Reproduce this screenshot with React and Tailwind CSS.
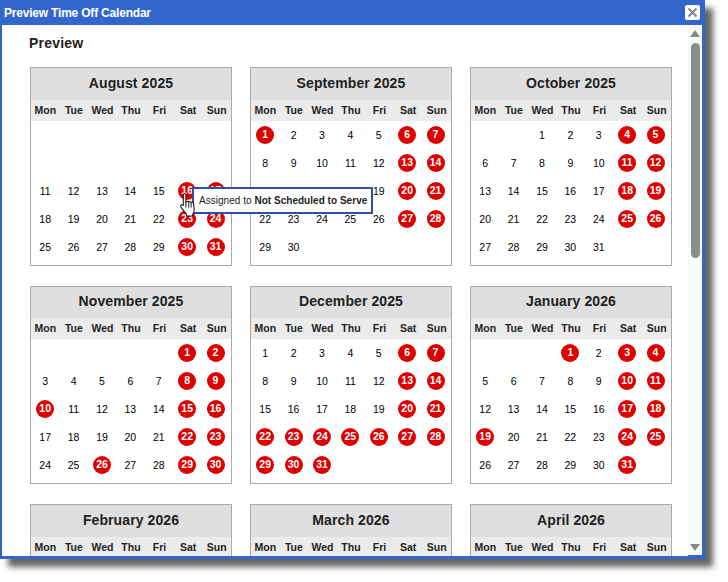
const cal = [
  { t: "August 2025", s: 4, n: 31, r: [16,17,23,24,30,31], hide: 10 },
  { t: "September 2025", s: 0, n: 30, r: [1,6,7,13,14,20,21,27,28] },
  { t: "October 2025", s: 2, n: 31, r: [4,5,11,12,18,19,25,26] },
  { t: "November 2025", s: 5, n: 30, r: [1,2,8,9,10,15,16,22,23,26,29,30] },
  { t: "December 2025", s: 0, n: 31, r: [6,7,13,14,20,21,22,23,24,25,26,27,28,29,30,31] },
  { t: "January 2026", s: 3, n: 31, r: [1,3,4,10,11,17,18,19,24,25,31] },
  { t: "February 2026", s: 6, n: 28, r: [] },
  { t: "March 2026", s: 6, n: 31, r: [] },
  { t: "April 2026", s: 2, n: 30, r: [] },
];
const week = ["Mon","Tue","Wed","Thu","Fri","Sat","Sun"];

function Month({ m }) {
  const cells = [];
  for (let i = 0; i < m.s; i++) cells.push(null);
  for (let d = 1; d <= m.n; d++) cells.push(d);
  return (
    <div className="border border-[#aaaaaa] h-[198.5px] shrink-0">
      <div className="h-[31.5px] pb-[1px] bg-[#dfdfdf] flex items-center justify-center text-[14px] font-bold text-[#222222] tracking-[0.1px]">{m.t}</div>
      <div className="h-[21px] pt-[1px] bg-[#ebebeb] grid grid-cols-7 items-center text-center text-[10.5px] font-bold text-[#222222]">
        {week.map((w) => <div key={w}>{w}</div>)}
      </div>
      <div className="grid grid-cols-[repeat(7,28.4px)] auto-rows-[28px]">
        {cells.map((d, i) => (
          <div key={i} className="flex items-center justify-center text-[10.5px] text-black">
            {d === null || (m.hide && d <= m.hide) ? null : m.r.includes(d) ? (
              <span className="w-[18px] h-[18px] rounded-full bg-[#dd0000] text-white font-bold flex items-center justify-center">{d}</span>
            ) : <span className="pt-[2px]">{d}</span>}
          </div>
        ))}
      </div>
    </div>
  );
}

export default function App() {
  return (
    <div className="w-[728px] h-[582px] bg-white font-['Liberation_Sans',Arial,sans-serif] overflow-hidden">
      <div className="relative w-[705px] h-[559px] flex flex-col bg-[#3366cc] shadow-[8px_8px_6px_rgba(0,0,0,0.6)]">
        <div className="h-[25px] shrink-0 flex items-center justify-between pl-[4px] pr-[5px]">
          <span className="text-[12px] font-bold text-white tracking-[-0.2px]">Preview Time Off Calendar</span>
          <span className="w-[15px] h-[15px] bg-white rounded-[2px] flex items-center justify-center">
            <svg width="11" height="11" viewBox="0 0 11 11"><path d="M1.5 1.5l8 8M9.5 1.5l-8 8" stroke="#7f8c8d" strokeWidth="2.2" /></svg>
          </span>
        </div>
        <div className="flex-1 min-h-0 flex ml-[2px] mr-[3px] mb-[3px]">
          <div className="flex-1 min-w-0 overflow-hidden pl-[28px] bg-white">
            <div className="h-[36px] mb-[6px] flex items-center text-[14px] font-bold text-[#222222] -ml-[1px] tracking-[0.2px]">Preview</div>
            <div className="grid grid-cols-[202px_202px_202px] gap-x-[18px] gap-y-[20px]">
              {cal.map((m) => <Month key={m.t} m={m} />)}
            </div>
          </div>
          <div className="w-[14px] shrink-0 bg-[#fafafa] flex flex-col items-center mb-[1px]">
            <svg className="mt-[5px] shrink-0" width="10" height="7" viewBox="0 0 10 7"><path d="M5 0l5 7H0z" fill="#888888" /></svg>
            <div className="mt-[6px] w-[9px] h-[215px] rounded-[5px] bg-[#8c8c8c] shrink-0" />
            <svg className="mt-[286px] shrink-0" width="10" height="7" viewBox="0 0 10 7"><path d="M5 7l5-7H0z" fill="#888888" /></svg>
          </div>
        </div>

        <div className="absolute left-[192px] top-[187px] w-[181px] h-[27px] border-2 border-[#2f4fa8] bg-white flex items-center pl-[5px] text-[10px] tracking-[0.03px] text-[#222222] whitespace-nowrap">
          <span>Assigned to <b>Not Scheduled to Serve</b></span>
        </div>
        <svg className="absolute left-[179px] top-[192px]" width="19" height="25" viewBox="0 0 17 24">
          <path d="M4.5 1.5c1 0 1.500.6 1.500 1.500v7l.5-.6c.5-.8 1.900-.7 2.200.3.6-.7 2-.6 2.300.4.7-.5 2-.3 2.300.7l.7 6.200c.1 1.800-.5 3.200-1.500 4.500v1.500H6.500v-1.500L1.300 14.500c-.8-1-.3-2.300.9-2.300.5 0 1 .3 1.300.7V3c0-.9.200-1.500 1-1.500z" fill="#ffffff" stroke="#111111" strokeWidth="1" strokeLinejoin="round" />
          <path d="M6 10v5M8.700 10v5M11 10.500V15" stroke="#111111" strokeWidth="0.9" />
        </svg>
      </div>
    </div>
  );
}
